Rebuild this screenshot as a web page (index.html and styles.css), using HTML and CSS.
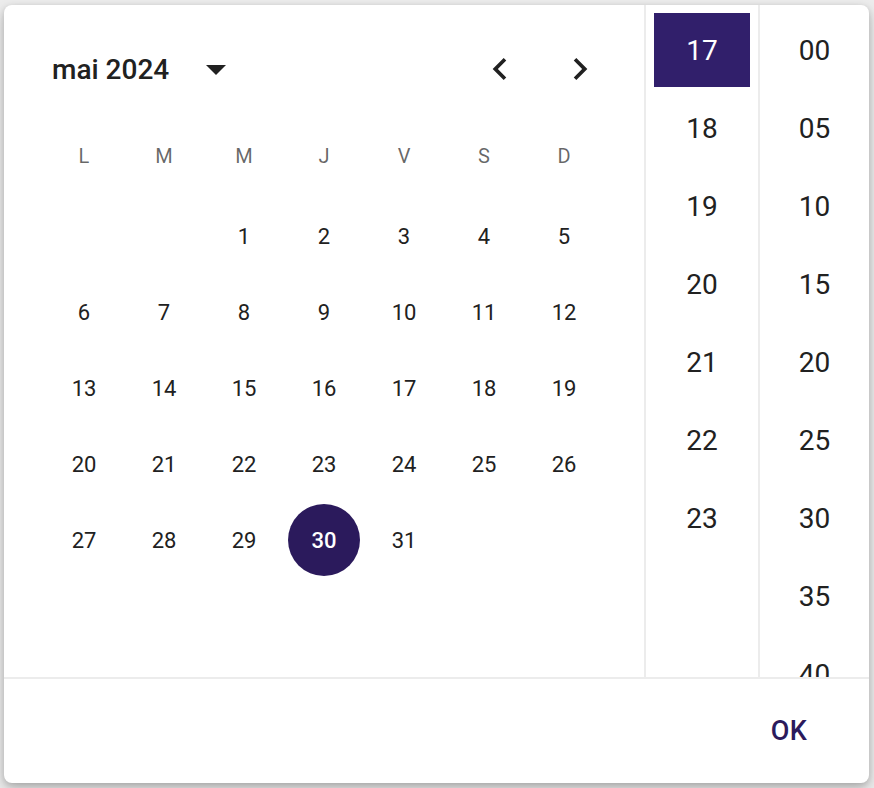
FILE: index.html
```html
<!DOCTYPE html>
<html>
  <head>
    <title>Date picker</title>
    <link rel="stylesheet" href="styles.css">
  </head>
  <body>
    <div class="dialog">
      <div class="picker">
        <div class="calendar">
          <div class="calendar-header">
            <div class="month-label">mai 2024</div>
            <button class="view-switch" aria-label="Changer de vue">
              <svg viewBox="0 0 24 24" width="48" height="48" fill="currentColor">
                <path d="M7 10l5 5 5-5z" />
              </svg>
            </button>
            <div class="nav">
              <button class="nav-btn" aria-label="Mois précédent">
                <svg viewBox="0 0 24 24" width="44" height="44" fill="currentColor">
                  <path d="M15.41 7.41 14 6l-6 6 6 6 1.41-1.41L10.83 12z" />
                </svg>
              </button>
              <button class="nav-btn" aria-label="Mois suivant">
                <svg viewBox="0 0 24 24" width="44" height="44" fill="currentColor">
                  <path d="M10 6 8.59 7.41 13.17 12l-4.58 4.59L10 18l6-6z" />
                </svg>
              </button>
            </div>
          </div>
          <div class="weekdays">
            <span>L</span><span>M</span><span>M</span><span>J</span><span>V</span><span>S</span><span>D</span>
          </div>
          <div class="days">
            <span></span><span></span>
            <span class="day">1</span><span class="day">2</span><span class="day">3</span><span class="day">4</span><span class="day">5</span>
            <span class="day">6</span><span class="day">7</span><span class="day">8</span><span class="day">9</span><span class="day">10</span><span class="day">11</span><span class="day">12</span>
            <span class="day">13</span><span class="day">14</span><span class="day">15</span><span class="day">16</span><span class="day">17</span><span class="day">18</span><span class="day">19</span>
            <span class="day">20</span><span class="day">21</span><span class="day">22</span><span class="day">23</span><span class="day">24</span><span class="day">25</span><span class="day">26</span>
            <span class="day">27</span><span class="day">28</span><span class="day">29</span><span class="day selected">30</span><span class="day">31</span>
          </div>
        </div>
        <div class="clock-col hours">
          <div class="item selected">17</div>
          <div class="item">18</div>
          <div class="item">19</div>
          <div class="item">20</div>
          <div class="item">21</div>
          <div class="item">22</div>
          <div class="item">23</div>
        </div>
        <div class="clock-col minutes">
          <div class="item">00</div>
          <div class="item">05</div>
          <div class="item">10</div>
          <div class="item">15</div>
          <div class="item">20</div>
          <div class="item">25</div>
          <div class="item">30</div>
          <div class="item">35</div>
          <div class="item">40</div>
          <div class="item">45</div>
          <div class="item">50</div>
          <div class="item">55</div>
        </div>
      </div>
      <div class="actions">
        <button class="ok-btn">OK</button>
      </div>
    </div>
  </body>
</html>
```

FILE: styles.css
```css
* {
  box-sizing: border-box;
}

html,
body {
  height: 100%;
  overflow: hidden;
}

body {
  margin: 0;
  background-color: #ececec;
  font-family: Roboto, "Noto Sans", sans-serif;
  color: #212121;
}

button {
  font-family: inherit;
  background: none;
  border: none;
  padding: 0;
  cursor: pointer;
  color: inherit;
}

.dialog {
  margin: 5px 0 0 4px;
  width: 865px;
  height: 778px;
  background-color: #fff;
  border-radius: 8px;
  box-shadow: 0 6px 14px rgba(0, 0, 0, 0.2), 0 2px 6px rgba(0, 0, 0, 0.14);
  display: flex;
  flex-direction: column;
  overflow: hidden;
}

.picker {
  display: flex;
  height: 674px;
  flex-shrink: 0;
  border-bottom: 2px solid #ececec;
  overflow: hidden;
}

/* calendar */
.calendar {
  width: 640px;
  flex-shrink: 0;
}

.calendar-header {
  display: flex;
  align-items: center;
  height: 60px;
  margin-top: 34px;
  padding: 0 24px 0 48px;
}

.month-label {
  font-size: 28px;
  font-weight: 500;
  color: #212121;
}

.view-switch {
  display: flex;
  margin-left: 23px;
  color: #212121;
}

.nav {
  display: flex;
  margin-left: auto;
}

.nav-btn {
  width: 80px;
  height: 60px;
  display: flex;
  align-items: center;
  justify-content: center;
  color: #212121;
}

.weekdays,
.days {
  display: grid;
  grid-template-columns: repeat(7, 80px);
  justify-content: center;
}

.weekdays {
  margin-top: 17px;
  height: 80px;
  align-items: center;
  justify-items: center;
  font-size: 20px;
  color: rgba(0, 0, 0, 0.6);
}

.days {
  padding-top: 4px;
  row-gap: 4px;
  grid-auto-rows: 72px;
}

.day {
  width: 72px;
  height: 72px;
  margin: 0 auto;
  display: flex;
  align-items: center;
  justify-content: center;
  border-radius: 50%;
  font-size: 22px;
  color: #212121;
}

.day.selected {
  background-color: #2b1a5c;
  color: #fff;
  font-weight: 500;
}

/* time columns */
.clock-col {
  display: flex;
  flex-direction: column;
  gap: 4px;
  border-left: 2px solid #ececec;
  padding-top: 8px;
  overflow: hidden;
}

.hours {
  width: 114px;
  flex-shrink: 0;
}

.minutes {
  flex: 1;
}

.item {
  height: 74px;
  margin: 0 8px;
  display: flex;
  align-items: center;
  justify-content: center;
  font-size: 28px;
  color: #212121;
  flex-shrink: 0;
}

.item.selected {
  background-color: #311f6b;
  color: #fff;
}

/* actions */
.actions {
  flex: 1;
  display: flex;
  align-items: center;
  justify-content: flex-end;
  padding: 0 16px;
}

.ok-btn {
  min-width: 128px;
  height: 72px;
  font-size: 27px;
  font-weight: 500;
  letter-spacing: 0.5px;
  color: #2b1a5c;
}
```
